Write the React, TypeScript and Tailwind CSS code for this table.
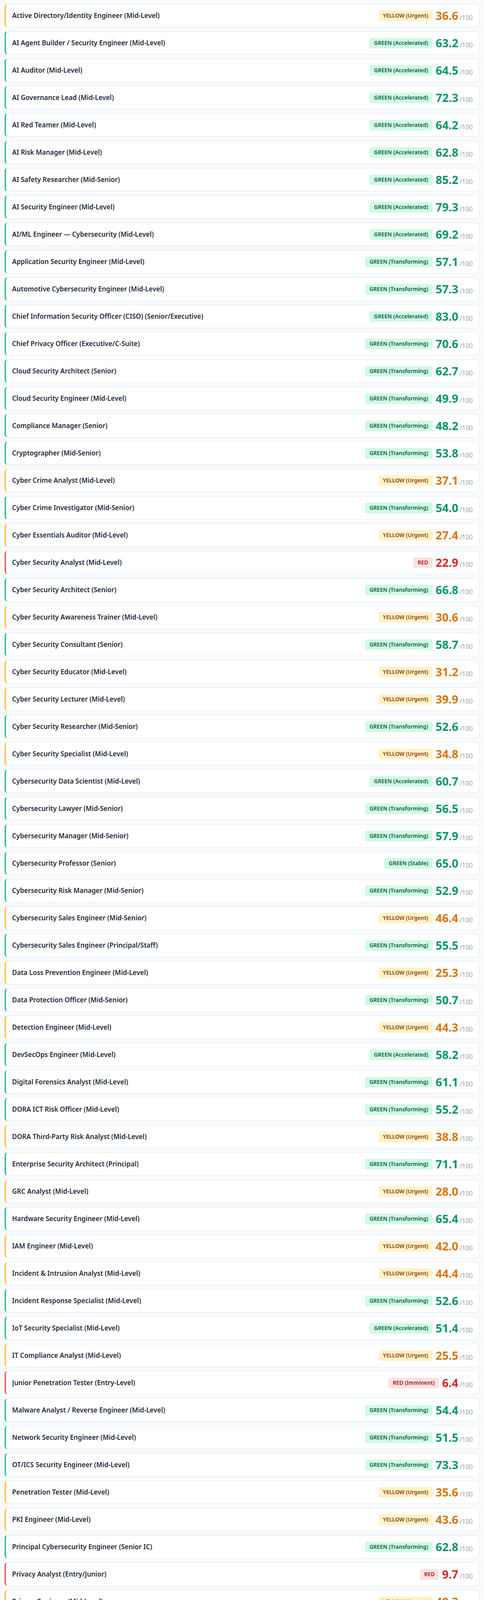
type Tier = "yellow" | "green" | "red";

type Role = { title: string; tier: Tier; label: string; score: string };

const roles: Role[] = [
  { title: "Active Directory/Identity Engineer (Mid-Level)", tier: "yellow", label: "YELLOW (Urgent)", score: "36.6" },
  { title: "AI Agent Builder / Security Engineer (Mid-Level)", tier: "green", label: "GREEN (Accelerated)", score: "63.2" },
  { title: "AI Auditor (Mid-Level)", tier: "green", label: "GREEN (Accelerated)", score: "64.5" },
  { title: "AI Governance Lead (Mid-Level)", tier: "green", label: "GREEN (Accelerated)", score: "72.3" },
  { title: "AI Red Teamer (Mid-Level)", tier: "green", label: "GREEN (Accelerated)", score: "64.2" },
  { title: "AI Risk Manager (Mid-Level)", tier: "green", label: "GREEN (Accelerated)", score: "62.8" },
  { title: "AI Safety Researcher (Mid-Senior)", tier: "green", label: "GREEN (Accelerated)", score: "85.2" },
  { title: "AI Security Engineer (Mid-Level)", tier: "green", label: "GREEN (Accelerated)", score: "79.3" },
  { title: "AI/ML Engineer — Cybersecurity (Mid-Level)", tier: "green", label: "GREEN (Accelerated)", score: "69.2" },
  { title: "Application Security Engineer (Mid-Level)", tier: "green", label: "GREEN (Transforming)", score: "57.1" },
  { title: "Automotive Cybersecurity Engineer (Mid-Level)", tier: "green", label: "GREEN (Transforming)", score: "57.3" },
  { title: "Chief Information Security Officer (CISO) (Senior/Executive)", tier: "green", label: "GREEN (Accelerated)", score: "83.0" },
  { title: "Chief Privacy Officer (Executive/C-Suite)", tier: "green", label: "GREEN (Transforming)", score: "70.6" },
  { title: "Cloud Security Architect (Senior)", tier: "green", label: "GREEN (Transforming)", score: "62.7" },
  { title: "Cloud Security Engineer (Mid-Level)", tier: "green", label: "GREEN (Transforming)", score: "49.9" },
  { title: "Compliance Manager (Senior)", tier: "green", label: "GREEN (Transforming)", score: "48.2" },
  { title: "Cryptographer (Mid-Senior)", tier: "green", label: "GREEN (Transforming)", score: "53.8" },
  { title: "Cyber Crime Analyst (Mid-Level)", tier: "yellow", label: "YELLOW (Urgent)", score: "37.1" },
  { title: "Cyber Crime Investigator (Mid-Senior)", tier: "green", label: "GREEN (Transforming)", score: "54.0" },
  { title: "Cyber Essentials Auditor (Mid-Level)", tier: "yellow", label: "YELLOW (Urgent)", score: "27.4" },
  { title: "Cyber Security Analyst (Mid-Level)", tier: "red", label: "RED", score: "22.9" },
  { title: "Cyber Security Architect (Senior)", tier: "green", label: "GREEN (Transforming)", score: "66.8" },
  { title: "Cyber Security Awareness Trainer (Mid-Level)", tier: "yellow", label: "YELLOW (Urgent)", score: "30.6" },
  { title: "Cyber Security Consultant (Senior)", tier: "green", label: "GREEN (Transforming)", score: "58.7" },
  { title: "Cyber Security Educator (Mid-Level)", tier: "yellow", label: "YELLOW (Urgent)", score: "31.2" },
  { title: "Cyber Security Lecturer (Mid-Level)", tier: "yellow", label: "YELLOW (Urgent)", score: "39.9" },
  { title: "Cyber Security Researcher (Mid-Senior)", tier: "green", label: "GREEN (Transforming)", score: "52.6" },
  { title: "Cyber Security Specialist (Mid-Level)", tier: "yellow", label: "YELLOW (Urgent)", score: "34.8" },
  { title: "Cybersecurity Data Scientist (Mid-Level)", tier: "green", label: "GREEN (Accelerated)", score: "60.7" },
  { title: "Cybersecurity Lawyer (Mid-Senior)", tier: "green", label: "GREEN (Transforming)", score: "56.5" },
  { title: "Cybersecurity Manager (Mid-Senior)", tier: "green", label: "GREEN (Transforming)", score: "57.9" },
  { title: "Cybersecurity Professor (Senior)", tier: "green", label: "GREEN (Stable)", score: "65.0" },
  { title: "Cybersecurity Risk Manager (Mid-Senior)", tier: "green", label: "GREEN (Transforming)", score: "52.9" },
  { title: "Cybersecurity Sales Engineer (Mid-Senior)", tier: "yellow", label: "YELLOW (Urgent)", score: "46.4" },
  { title: "Cybersecurity Sales Engineer (Principal/Staff)", tier: "green", label: "GREEN (Transforming)", score: "55.5" },
  { title: "Data Loss Prevention Engineer (Mid-Level)", tier: "yellow", label: "YELLOW (Urgent)", score: "25.3" },
  { title: "Data Protection Officer (Mid-Senior)", tier: "green", label: "GREEN (Transforming)", score: "50.7" },
  { title: "Detection Engineer (Mid-Level)", tier: "yellow", label: "YELLOW (Urgent)", score: "44.3" },
  { title: "DevSecOps Engineer (Mid-Level)", tier: "green", label: "GREEN (Accelerated)", score: "58.2" },
  { title: "Digital Forensics Analyst (Mid-Level)", tier: "green", label: "GREEN (Transforming)", score: "61.1" },
  { title: "DORA ICT Risk Officer (Mid-Level)", tier: "green", label: "GREEN (Transforming)", score: "55.2" },
  { title: "DORA Third-Party Risk Analyst (Mid-Level)", tier: "yellow", label: "YELLOW (Urgent)", score: "38.8" },
  { title: "Enterprise Security Architect (Principal)", tier: "green", label: "GREEN (Transforming)", score: "71.1" },
  { title: "GRC Analyst (Mid-Level)", tier: "yellow", label: "YELLOW (Urgent)", score: "28.0" },
  { title: "Hardware Security Engineer (Mid-Level)", tier: "green", label: "GREEN (Transforming)", score: "65.4" },
  { title: "IAM Engineer (Mid-Level)", tier: "yellow", label: "YELLOW (Urgent)", score: "42.0" },
  { title: "Incident & Intrusion Analyst (Mid-Level)", tier: "yellow", label: "YELLOW (Urgent)", score: "44.4" },
  { title: "Incident Response Specialist (Mid-Level)", tier: "green", label: "GREEN (Transforming)", score: "52.6" },
  { title: "IoT Security Specialist (Mid-Level)", tier: "green", label: "GREEN (Accelerated)", score: "51.4" },
  { title: "IT Compliance Analyst (Mid-Level)", tier: "yellow", label: "YELLOW (Urgent)", score: "25.5" },
  { title: "Junior Penetration Tester (Entry-Level)", tier: "red", label: "RED (Imminent)", score: "6.4" },
  { title: "Malware Analyst / Reverse Engineer (Mid-Level)", tier: "green", label: "GREEN (Transforming)", score: "54.4" },
  { title: "Network Security Engineer (Mid-Level)", tier: "green", label: "GREEN (Transforming)", score: "51.5" },
  { title: "OT/ICS Security Engineer (Mid-Level)", tier: "green", label: "GREEN (Transforming)", score: "73.3" },
  { title: "Penetration Tester (Mid-Level)", tier: "yellow", label: "YELLOW (Urgent)", score: "35.6" },
  { title: "PKI Engineer (Mid-Level)", tier: "yellow", label: "YELLOW (Urgent)", score: "43.6" },
  { title: "Principal Cybersecurity Engineer (Senior IC)", tier: "green", label: "GREEN (Transforming)", score: "62.8" },
  { title: "Privacy Analyst (Entry/Junior)", tier: "red", label: "RED", score: "9.7" },
  { title: "Privacy Engineer (Mid-Level)", tier: "yellow", label: "YELLOW (Urgent)", score: "40.3" },
  { title: "Privacy Officer (Mid-Senior)", tier: "yellow", label: "YELLOW (Urgent)", score: "43.2" },
  { title: "Product Security Engineer (Mid-Level)", tier: "green", label: "GREEN (Transforming)", score: "54.0" },
  { title: "Purple Team Operator (Senior)", tier: "green", label: "GREEN (Transforming)", score: "54.6" },
  { title: "Red Team Leader (Senior)", tier: "green", label: "GREEN (Transforming)", score: "57.1" },
  { title: "Red Team Operator (Mid-Level)", tier: "yellow", label: "YELLOW (Moderate)", score: "47.5" },
  { title: "Security Administrator (Mid-Level)", tier: "red", label: "RED", score: "23.2" },
  { title: "Security Auditor (Mid-Level)", tier: "yellow", label: "YELLOW (Urgent)", score: "44.4" },
  { title: "Security Code Auditor (Mid-Level)", tier: "yellow", label: "YELLOW (Urgent)", score: "41.7" },
  { title: "Security Engineer (Mid-Level)", tier: "yellow", label: "YELLOW (Urgent)", score: "44.6" },
  { title: "Security Software Developer (Mid-Level)", tier: "green", label: "GREEN (Transforming)", score: "51.5" },
  { title: "Senior Cloud Security Architect (Senior)", tier: "green", label: "GREEN (Transforming)", score: "64.6" },
  { title: "Senior Cloud Security Engineer (Senior)", tier: "green", label: "GREEN (Transforming)", score: "58.2" },
  { title: "Senior Malware Analyst (Senior)", tier: "green", label: "GREEN (Transforming)", score: "60.0" },
  { title: "Senior Network Security Engineer (Senior)", tier: "green", label: "GREEN (Transforming)", score: "58.5" },
  { title: "Senior Penetration Tester (7+ Years)", tier: "yellow", label: "YELLOW (Moderate)", score: "47.5" },
  { title: "Senior Security Analyst (Senior)", tier: "yellow", label: "YELLOW (Moderate)", score: "45.9" },
  { title: "Senior Security Architect (Senior)", tier: "green", label: "GREEN (Transforming)", score: "67.8" },
  { title: "Senior Security Consultant (Senior)", tier: "green", label: "GREEN (Transforming)", score: "63.1" },
  { title: "Senior SOC Analyst (Tier 3 / Lead)", tier: "yellow", label: "YELLOW (Moderate)", score: "47.1" },
  { title: "SOAR Engineer (Mid-Level)", tier: "yellow", label: "YELLOW (Urgent)", score: "27.6" },
  { title: "SOC Analyst (Tier 1 / Entry-Level)", tier: "red", label: "RED (Imminent)", score: "5.4" },
  { title: "SOC Analyst (Tier 2 / Mid-Level)", tier: "yellow", label: "YELLOW (Urgent)", score: "33.3" },
  { title: "SOC Manager (Senior)", tier: "green", label: "GREEN (Transforming)", score: "61.8" },
  { title: "Supply Chain Security Analyst (Mid-Level)", tier: "yellow", label: "YELLOW (Urgent)", score: "34.9" },
  { title: "Third Party Risk Lead (Cyber) (Mid-Level)", tier: "yellow", label: "YELLOW (Urgent)", score: "38.3" },
  { title: "Third Party Risk Lead (Cyber) (Mid-to-Senior)", tier: "green", label: "GREEN (Transforming)", score: "59.3" },
  { title: "Threat Hunter (Mid-Senior)", tier: "yellow", label: "YELLOW (Urgent)", score: "45.9" },
  { title: "Threat Intelligence Analyst (Mid-Level)", tier: "yellow", label: "YELLOW (Urgent)", score: "30.4" },
  { title: "TLPT Manager (Mid-Senior)", tier: "green", label: "GREEN (Transforming)", score: "57.9" },
  { title: "Virtual CISO / vCISO (Mid-to-Senior)", tier: "yellow", label: "YELLOW (Urgent)", score: "37.4" },
  { title: "Vulnerability Management Analyst (Mid-Level)", tier: "red", label: "RED", score: "16.7" },
  { title: "Vulnerability Tester / Scanner Operator (Entry-Level)", tier: "red", label: "RED (Imminent)", score: "2.7" },
];

const styles: Record<Tier, { edge: string; badge: string; score: string }> = {
  yellow: {
    edge: "border-l-[#fbbf24]",
    badge: "bg-[#fef3c7] text-[#92400e]",
    score: "text-[#d97706]",
  },
  green: {
    edge: "border-l-[#10b981]",
    badge: "bg-[#d1fae5] text-[#065f46]",
    score: "text-[#059669]",
  },
  red: {
    edge: "border-l-[#ef4444]",
    badge: "bg-[#fee2e2] text-[#991b1b]",
    score: "text-[#dc2626]",
  },
};

function RoleRow({ role }: { role: Role }) {
  const s = styles[role.tier];
  return (
    <div
      className={`flex h-[60px] shrink-0 items-center justify-between overflow-hidden rounded-lg border border-[#e2e8f0] border-l-[3px] bg-white px-4 ${s.edge}`}
    >
      <span className="truncate text-[17px] font-semibold leading-6 text-[#1e293b]">{role.title}</span>
      <div className="flex shrink-0 items-center gap-2">
        <span className={`flex h-[27px] items-center rounded px-[11px] text-sm font-semibold ${s.badge}`}>
          {role.label}
        </span>
        <div className="flex items-baseline gap-1">
          <span className={`text-[29px] font-bold leading-9 ${s.score}`}>{role.score}</span>
          <span className="text-base font-light text-[#64748b]">/100</span>
        </div>
      </div>
    </div>
  );
}

export default function App() {
  return (
    <div className="min-h-screen bg-[#f8fafc] px-3 pt-[10px] pb-3 font-['Noto_Sans',sans-serif]">
      <div className="flex flex-col gap-[10px]">
        {roles.map((role) => (
          <RoleRow key={role.title + role.score} role={role} />
        ))}
      </div>
    </div>
  );
}
